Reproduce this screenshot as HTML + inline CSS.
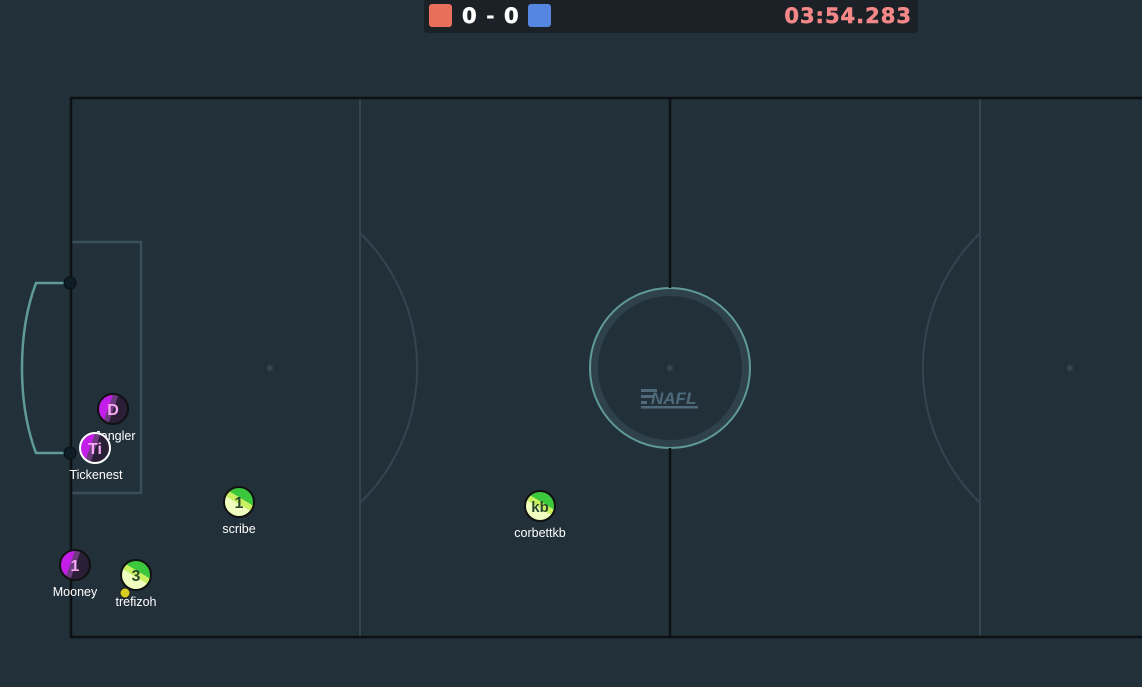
<!DOCTYPE html>
<html><head><style>
html,body{margin:0;padding:0;background:#22303a;width:1142px;height:687px;overflow:hidden;font-family:"Liberation Sans",sans-serif}
svg{position:absolute;left:0;top:0}
</style></head><body>
<svg width="1142" height="687" viewBox="0 0 1142 687">
<defs>
<linearGradient id="pur" x1="0" y1="0" x2="1" y2="0.35">
<stop offset="0" stop-color="#c21ee8"/><stop offset="0.45" stop-color="#c21ee8"/>
<stop offset="0.45" stop-color="#6e3a80"/><stop offset="0.62" stop-color="#6e3a80"/>
<stop offset="0.62" stop-color="#2b1f38"/><stop offset="1" stop-color="#2b1f38"/>
</linearGradient>
<linearGradient id="grn" x1="0.2" y1="1" x2="0.8" y2="0">
<stop offset="0" stop-color="#f0ffc0"/><stop offset="0.45" stop-color="#f0ffc0"/>
<stop offset="0.45" stop-color="#c8f060"/><stop offset="0.62" stop-color="#c8f060"/>
<stop offset="0.62" stop-color="#3cc83c"/><stop offset="1" stop-color="#3cc83c"/>
</linearGradient>
</defs>
<rect width="1142" height="687" fill="#22303a"/>
<g stroke="#34454f" stroke-width="2" fill="none">
<line x1="360" y1="98" x2="360" y2="637"/>
<line x1="980" y1="98" x2="980" y2="637"/>
<path d="M360 233 A188 188 0 0 1 360 503"/>
<path d="M980 233 A188 188 0 0 0 980 503"/>
</g>
<path d="M70 242 H141 V493 H70" stroke="#3a4f59" stroke-width="2.5" fill="none"/>
<circle cx="270" cy="368" r="3" fill="#34454f"/>
<circle cx="1070" cy="368" r="3" fill="#34454f"/>
<circle cx="670" cy="368" r="76" fill="none" stroke="#2f414a" stroke-width="8"/>
<circle cx="670" cy="368" r="80" fill="none" stroke="#5f9a98" stroke-width="2"/>
<circle cx="670" cy="368" r="3" fill="#34454f"/>
<path d="M1142 98 H71 V637 H1142" stroke="#0d1114" stroke-width="2.5" fill="none"/>
<line x1="670" y1="98" x2="670" y2="288" stroke="#0d1114" stroke-width="2.5"/>
<line x1="670" y1="448" x2="670" y2="637" stroke="#0d1114" stroke-width="2.5"/>
<g fill="#4e6a7a">
<rect x="641" y="389" width="16" height="3"/><rect x="641" y="395" width="12" height="3"/><rect x="641" y="401" width="6" height="3"/>
<text x="651" y="404" font-size="17" font-weight="bold" font-style="italic" fill="#4e6a7a" font-family="Liberation Sans">NAFL</text>
<rect x="641" y="406" width="57" height="2.5"/>
</g>
<path d="M70 283 H36 Q22 320 22 368 Q22 416 36 453 H70" stroke="#5f9a98" stroke-width="2.5" fill="none"/>
<circle cx="70" cy="283" r="6" fill="#0f1d26" stroke="#0a0f12" stroke-width="1"/>
<circle cx="70" cy="453" r="6" fill="#0f1d26" stroke="#0a0f12" stroke-width="1"/>
<g font-family="Liberation Sans" text-anchor="middle">
<circle cx="113" cy="409" r="15" fill="url(#pur)" stroke="#111" stroke-width="2"/>
<text x="113" y="415" font-size="16" font-weight="bold" fill="#f8a8f4">D</text>
<text x="115" y="440" font-size="12.5" fill="#fff">Jangler</text>
<circle cx="95" cy="448" r="15" fill="url(#pur)" stroke="#fff" stroke-width="2"/>
<text x="95" y="454" font-size="16" font-weight="bold" fill="#f8a8f4">Ti</text>
<text x="96" y="479" font-size="12.5" fill="#fff">Tickenest</text>
<circle cx="75" cy="565" r="15" fill="url(#pur)" stroke="#111" stroke-width="2"/>
<text x="75" y="571" font-size="16" font-weight="bold" fill="#f8a8f4">1</text>
<text x="75" y="596" font-size="12.5" fill="#fff">Mooney</text>
<circle cx="136" cy="575" r="15" fill="url(#grn)" stroke="#111" stroke-width="2"/>
<text x="136" y="581" font-size="16" font-weight="bold" fill="#2a4a2a">3</text>
<circle cx="125" cy="593" r="5" fill="#d8d020" stroke="#222" stroke-width="1"/>
<text x="136" y="606" font-size="12.5" fill="#fff">trefizoh</text>
<circle cx="239" cy="502" r="15" fill="url(#grn)" stroke="#111" stroke-width="2"/>
<text x="239" y="508" font-size="16" font-weight="bold" fill="#2a4a2a">1</text>
<text x="239" y="533" font-size="12.5" fill="#fff">scribe</text>
<circle cx="540" cy="506" r="15" fill="url(#grn)" stroke="#111" stroke-width="2"/>
<text x="540" y="512" font-size="15" font-weight="bold" fill="#2a4a2a">kb</text>
<text x="540" y="537" font-size="12.5" fill="#fff">corbettkb</text>
</g>
<path d="M424 0 H918 V29 Q918 33 914 33 H428 Q424 33 424 29 Z" fill="#1b2126"/>
<rect x="429" y="4" width="23" height="23" rx="3" fill="#e8705a"/>
<rect x="528" y="4" width="23" height="23" rx="3" fill="#5586e0"/>
<g font-family="DejaVu Sans" font-weight="bold" font-size="21">
<text x="462" y="23" fill="#fff" stroke="#fff" stroke-width="0.6">0</text>
<text x="486" y="23" fill="#fff">-</text>
<text x="504" y="23" fill="#fff" stroke="#fff" stroke-width="0.6">0</text>
<text x="912" y="23" fill="#f48888" stroke="#f48888" stroke-width="0.5" text-anchor="end" letter-spacing="1">03:54.283</text>
</g>
</svg>
</body></html>
